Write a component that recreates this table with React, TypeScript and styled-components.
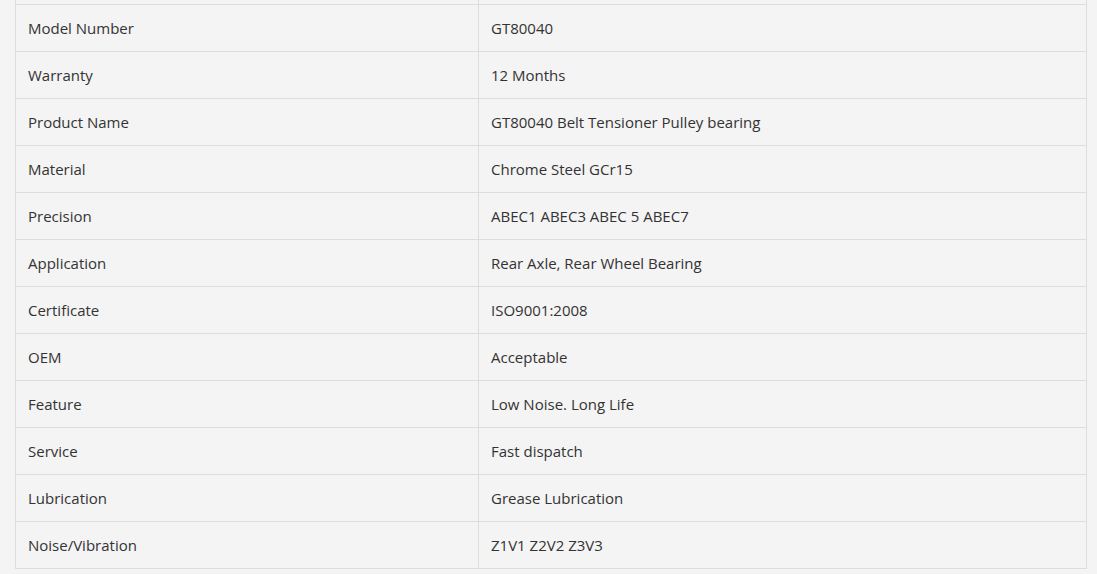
import { createGlobalStyle } from "styled-components";
import styled from "styled-components";

const GlobalStyle = createGlobalStyle`
  html, body {
    margin: 0;
    padding: 0;
    background: #f4f4f4;
    overflow: hidden;
  }
`;

const specs: [string, string][] = [
  ["Model Number", "GT80040"],
  ["Warranty", "12 Months"],
  ["Product Name", "GT80040 Belt Tensioner Pulley bearing"],
  ["Material", "Chrome Steel GCr15"],
  ["Precision", "ABEC1 ABEC3 ABEC 5 ABEC7"],
  ["Application", "Rear Axle, Rear Wheel Bearing"],
  ["Certificate", "ISO9001:2008"],
  ["OEM", "Acceptable"],
  ["Feature", "Low Noise. Long Life"],
  ["Service", "Fast dispatch"],
  ["Lubrication", "Grease Lubrication"],
  ["Noise/Vibration", "Z1V1 Z2V2 Z3V3"],
];

export default function App() {
  return (
    <>
      <GlobalStyle />
      <Page>
        <SpecTable>
          <tbody>
            {/* row above, scrolled out of view */}
            <tr aria-hidden>
              <LabelCell />
              <ValueCell />
            </tr>
            {specs.map(([label, value]) => (
              <tr key={label}>
                <LabelCell>{label}</LabelCell>
                <ValueCell>{value}</ValueCell>
              </tr>
            ))}
          </tbody>
        </SpecTable>
      </Page>
    </>
  );
}

const Page = styled.div`
  padding: 0 10px 0 15px;
  height: 574px;
  overflow: hidden;
  background: #f4f4f4;
`;

const SpecTable = styled.table`
  width: 1072px;
  margin-top: -43px;
  border-collapse: collapse;
  font-family: "Open Sans", "Noto Sans", sans-serif;
  font-size: 15px;
  color: #333333;
`;

const Cell = styled.td`
  height: 46px;
  padding: 0 12px;
  border: 1px solid #dddddd;
  vertical-align: middle;
`;

const LabelCell = styled(Cell)`
  width: 438px;
`;

const ValueCell = styled(Cell)``;
